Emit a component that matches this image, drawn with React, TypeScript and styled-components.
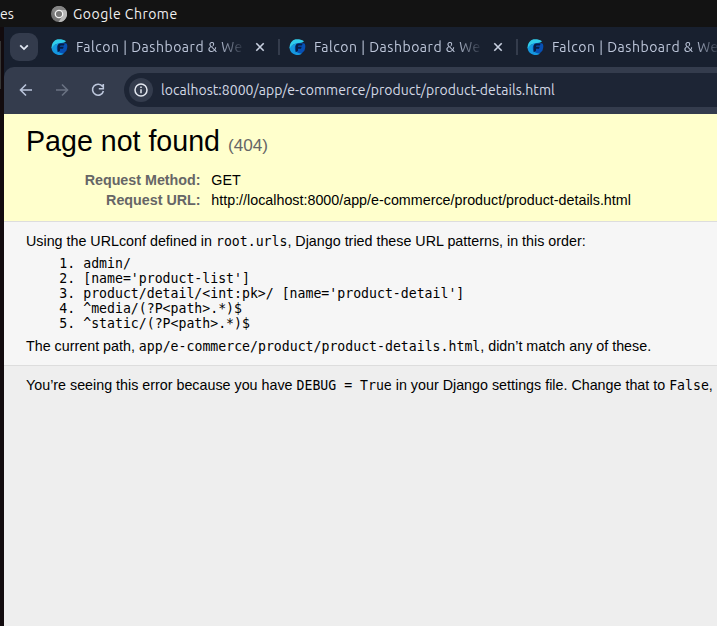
import React from "react";
import styled, { createGlobalStyle } from "styled-components";

const Global = createGlobalStyle`
  * { box-sizing: border-box; margin: 0; padding: 0; }
  body { width: 100vw; height: 100vh; overflow: hidden; background: #120d10; }
`;

const Desktop = styled.div`
  width: 717px;
  height: 626px;
  overflow: hidden;
  display: flex;
  flex-direction: column;
  background: #120b0e;
`;

const TopBar = styled.header`
  height: 27px;
  flex: none;
  display: flex;
  align-items: center;
  background: #131313;
  color: #f0f0f0;
  font: 14px/27px "Ubuntu", "Noto Sans", sans-serif;
  white-space: nowrap;
`;

const MenuTail = styled.span`
  width: 51px;
  flex: none;
  padding-top: 1px;
`;

const AppName = styled.span`
  margin-left: 6px;
  padding-top: 1px;
  letter-spacing: 0.5px;
`;

const Workspace = styled.div`
  flex: 1;
  display: flex;
  min-height: 0;
`;

const Edge = styled.div`
  width: 4px;
  flex: none;
  padding-top: 14px;
  &::before {
    content: "";
    display: block;
    width: 1px;
    height: 48px;
    background: #353535;
  }
`;

const Browser = styled.main`
  width: 713px;
  flex: none;
  display: flex;
  flex-direction: column;
  background: #18202f;
`;

const TabStrip = styled.div`
  height: 40px;
  flex: none;
  display: flex;
  align-items: center;
  padding-left: 6px;
`;

const TabSearch = styled.button`
  width: 28px;
  height: 28px;
  flex: none;
  border: 0;
  border-radius: 9px;
  background: #333b4c;
  display: grid;
  place-items: center;
  margin-right: 4px;
`;

const Tab = styled.div<{ $divider: boolean }>`
  width: 238px;
  height: 16px;
  flex: none;
  display: flex;
  align-items: center;
  padding-left: 9px;
  border-right: 2px solid ${(p) => (p.$divider ? "#343c4c" : "transparent")};
`;

const TabTitle = styled.span`
  width: 171px;
  height: 24px;
  flex: none;
  margin: 0 8px;
  overflow: hidden;
  white-space: nowrap;
  color: #bdc6da;
  font: 14px/24px "Ubuntu", "Noto Sans", sans-serif;
  letter-spacing: 0.52px;
  mask-image: linear-gradient(to right, #000 142px, transparent 169px);
`;

const Toolbar = styled.div`
  height: 47px;
  flex: none;
  display: flex;
  align-items: center;
  padding-left: 13px;
  background: #343c4d;
  border-radius: 10px 0 0 0;
`;

const NavButton = styled.button`
  width: 18px;
  height: 18px;
  flex: none;
  margin: -1px 18px 0 0;
  border: 0;
  background: none;
  display: grid;
  place-items: center;
`;

const AddressBar = styled.div`
  height: 34px;
  flex: 1;
  margin: -1px 0 0 -1px;
  border-radius: 17px 0 0 17px;
  background: #1d2535;
  display: flex;
  align-items: center;
  padding-left: 5px;
  color: #d3d9e5;
  font: 14px/34px "Ubuntu", "Noto Sans", sans-serif;
`;

const InfoBadge = styled.span`
  width: 24px;
  height: 24px;
  flex: none;
  border-radius: 50%;
  background: #343c4d;
  display: grid;
  place-items: center;
  margin-right: 8px;
`;

const Url = styled.span`
  white-space: nowrap;
  letter-spacing: 0.04px;
`;

const Page = styled.article`
  flex: 1;
  background: #eee;
  color: #000;
  font: 14.3px/20px "Liberation Sans", Arial, sans-serif;
  white-space: nowrap;
  overflow: hidden;
`;

const Summary = styled.section`
  height: 108px;
  padding: 11px 22px 0;
  background: #ffc;
  border-bottom: 1px solid #ddd;
`;

const Heading = styled.h1`
  font-weight: 400;
  font-size: 28.6px;
  line-height: 33px;
  margin-bottom: 8px;
`;

const Status = styled.span`
  font-size: 17.16px;
  color: #666;
`;

const Meta = styled.dl`
  display: grid;
  grid-template-columns: 174.6px auto;
  column-gap: 10.7px;
`;

const MetaLabel = styled.dt`
  text-align: right;
  font-weight: 700;
  color: #666;
`;

const MetaValue = styled.dd``;

const Info = styled.section`
  height: 144px;
  padding: 9px 22px 0;
  background: #f6f6f6;
  border-bottom: 1px solid #ddd;
`;

const Code = styled.code`
  font: 13.2px/15px "DejaVu Sans Mono", monospace;
`;

const Patterns = styled.ol`
  padding: 5px 0 5px 57.2px;
  font: 13.2px/15px "DejaVu Sans Mono", monospace;
`;

const Explanation = styled.section`
  padding: 9px 22px;
`;

const patterns = [
  "admin/",
  "[name='product-list']",
  "product/detail/<int:pk>/ [name='product-detail']",
  "^media/(?P<path>.*)$",
  "^static/(?P<path>.*)$",
];

const ChromeMark = () => (
  <svg width="16" height="16" viewBox="0 0 16 16">
    <circle cx="8" cy="8" r="8" fill="#757575" />
    <path d="M8 4h7a8 8 0 0 1-7.5 12l4-6Z" fill="#b9b9b9" />
    <path d="M1 4a8 8 0 0 1 14 0H8L4.5 10Z" fill="#858585" />
    <circle cx="8" cy="8" r="3.7" fill="#777" stroke="#f3f3f3" strokeWidth="1.3" />
  </svg>
);

const FalconMark = () => (
  <svg width="17" height="16" viewBox="0 0 17 16">
    <path d="M5 4.500C8 3 13 3.500 15.800 4.800c1.200 3 .2 7.200-2.800 9.300-3.500 2.300-8 2-10.500-.8Z" fill="#0750b4" />
    <path d="M.6 8C.3 12 3.500 15.500 7.500 15.900c2 .2 4-.4 5.500-1.500-4 .3-7.200-1.600-7.200-5.100 0-2 .7-3.300 2-4.500C5 5 2.500 6 .6 8Z" fill="#1598df" />
    <path d="M15 2.200C12.500.2 9 0 6.500.3 3.200 1 .3 4.600.7 9.500 2 6.500 4.500 5 8 4.300 11 3.700 13.700 4.200 15 2.200Z" fill="#30cdec" />
    <path d="M6.600 13.200V7.500c0-2 1.200-3 3.200-3h4l-1 2h-2.500c-.9 0-1.300.4-1.300 1.200h3.700l-.7 2.100H9v1.900Z" fill="#071d44" />
  </svg>
);

const CloseIcon = () => (
  <svg width="10" height="10" viewBox="0 0 10 10" fill="none" stroke="#c8d0e0" strokeWidth="1.6">
    <path d="m1.300 1.300 7.400 7.400M8.700 1.300 1.300 8.700" />
  </svg>
);

const ArrowIcon = ({ forward = false }: { forward?: boolean }) => (
  <svg width="14" height="14" viewBox="0 0 14 14" fill="none" stroke={forward ? "#697282" : "#b9c4da"} strokeWidth="1.6">
    <path d={forward ? "M1 7h11M7 1.500 12.500 7 7 12.500" : "M13 7H2M7 1.500 1.500 7 7 12.500"} />
  </svg>
);

const ReloadIcon = () => (
  <svg width="14" height="14" viewBox="0 0 14 14" fill="none" stroke="#bdc7dc" strokeWidth="1.6">
    <path d="M11.600 3.600A5.500 5.500 0 1 0 12.400 8M12.300 1v4.700H7.800" />
  </svg>
);

export default function App() {
  return (
    <Desktop>
      <Global />
      <TopBar>
        <MenuTail>es</MenuTail>
        <ChromeMark />
        <AppName>Google Chrome</AppName>
      </TopBar>
      <Workspace>
        <Edge />
        <Browser>
          <TabStrip>
            <TabSearch aria-label="Search tabs">
              <svg width="10" height="7" viewBox="0 0 10 7" fill="none" stroke="#e1e7f2" strokeWidth="1.8">
                <path d="m1.200 1.300 3.800 3.800 3.800-3.800" />
              </svg>
            </TabSearch>
            {[0, 1, 2].map((i) => (
              <Tab key={i} $divider={i < 2}>
                <FalconMark />
                <TabTitle>Falcon | Dashboard &amp; We</TabTitle>
                <CloseIcon />
              </Tab>
            ))}
          </TabStrip>
          <Toolbar>
            <NavButton aria-label="Back"><ArrowIcon /></NavButton>
            <NavButton aria-label="Forward"><ArrowIcon forward /></NavButton>
            <NavButton aria-label="Reload"><ReloadIcon /></NavButton>
            <AddressBar>
              <InfoBadge>
                <svg width="14" height="14" viewBox="0 0 14 14" fill="none" stroke="#e3e7ef" strokeWidth="1.5">
                  <circle cx="7" cy="7" r="6" />
                  <path d="M7 6.200v4M7 3.500v1.500" />
                </svg>
              </InfoBadge>
              <Url>localhost:8000/app/e-commerce/product/product-details.html</Url>
            </AddressBar>
          </Toolbar>
          <Page>
            <Summary>
              <Heading>Page not found <Status>(404)</Status></Heading>
              <Meta>
                <MetaLabel>Request Method:</MetaLabel>
                <MetaValue>GET</MetaValue>
                <MetaLabel>Request URL:</MetaLabel>
                <MetaValue>http://localhost:8000/app/e-commerce/product/product-details.html</MetaValue>
              </Meta>
            </Summary>
            <Info>
              <p>Using the URLconf defined in <Code>root.urls</Code>, Django tried these URL patterns, in this order:</p>
              <Patterns>
                {patterns.map((p) => <li key={p}>{p}</li>)}
              </Patterns>
              <p>The current path, <Code>app/e-commerce/product/product-details.html</Code>, didn’t match any of these.</p>
            </Info>
            <Explanation>
              <p>You’re seeing this error because you have <Code>DEBUG = True</Code> in your Django settings file. Change that to <Code>False</Code>,</p>
            </Explanation>
          </Page>
        </Browser>
      </Workspace>
    </Desktop>
  );
}
